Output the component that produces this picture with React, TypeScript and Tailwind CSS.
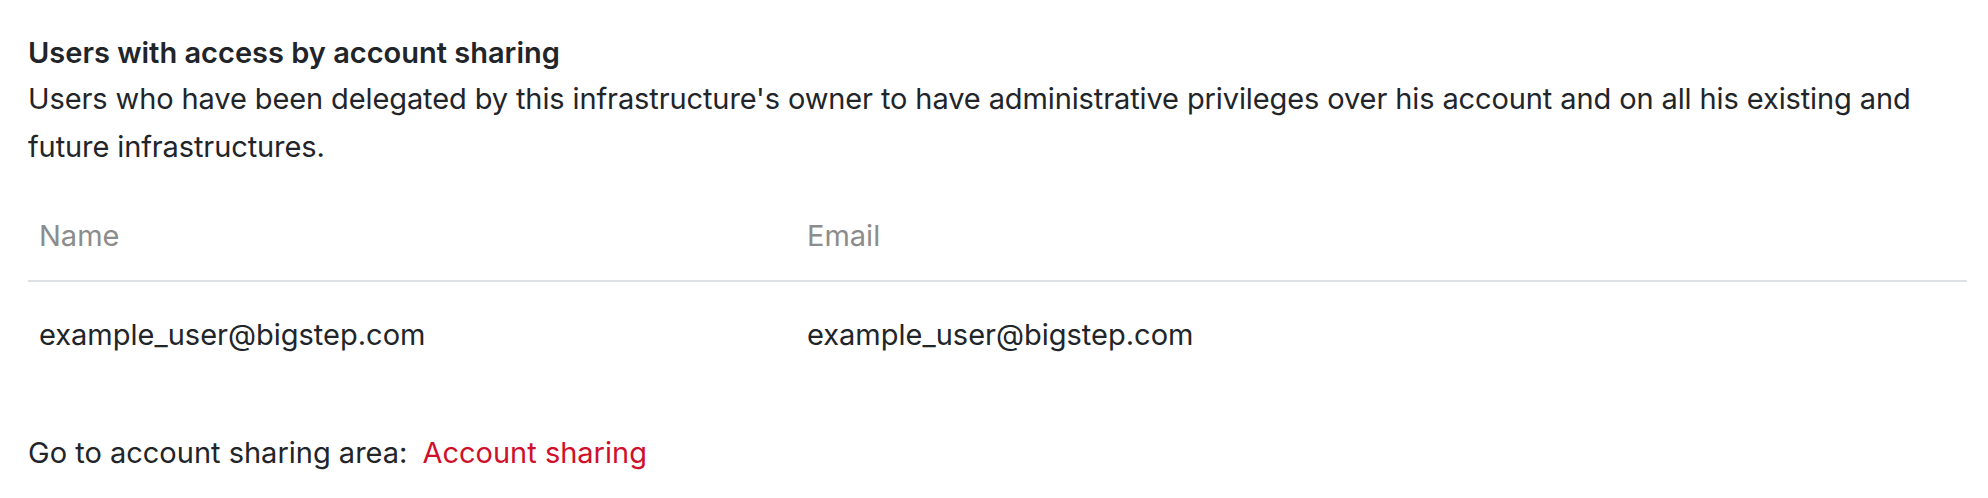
export default function App() {
  return (
    <div className="min-h-screen bg-white pl-[28px] pr-[21px] pt-[31px] text-[29px] text-[#212529] [font-family:Inter,'Liberation_Sans',sans-serif]">
      <h3 className="font-semibold leading-[44px]">Users with access by account sharing</h3>
      <p className="leading-[48px] tracking-[-0.11px]">
        Users who have been delegated by this infrastructure's owner to have administrative privileges over his account and on all his existing and future infrastructures.
      </p>

      <table className="mt-[20px] w-full border-collapse text-left">
        <thead>
          <tr className="border-b-2 border-[#dee2e6]">
            <th className="w-[768px] py-[22px] pl-[11px] font-normal leading-[45px] text-[#8c8c8c]">Name</th>
            <th className="py-[22px] pl-[11px] font-normal leading-[45px] text-[#8c8c8c]">Email</th>
          </tr>
        </thead>
        <tbody>
          <tr>
            <td className="py-[30px] pl-[11px] leading-[45px]">example_user@bigstep.com</td>
            <td className="py-[30px] pl-[11px] leading-[45px]">example_user@bigstep.com</td>
          </tr>
        </tbody>
      </table>

      <div className="mt-[43px] flex gap-[15px] leading-[45px]">
        <span>Go to account sharing area:</span>
        <a href="#" className="text-[#d0102b]">Account sharing</a>
      </div>
    </div>
  );
}
